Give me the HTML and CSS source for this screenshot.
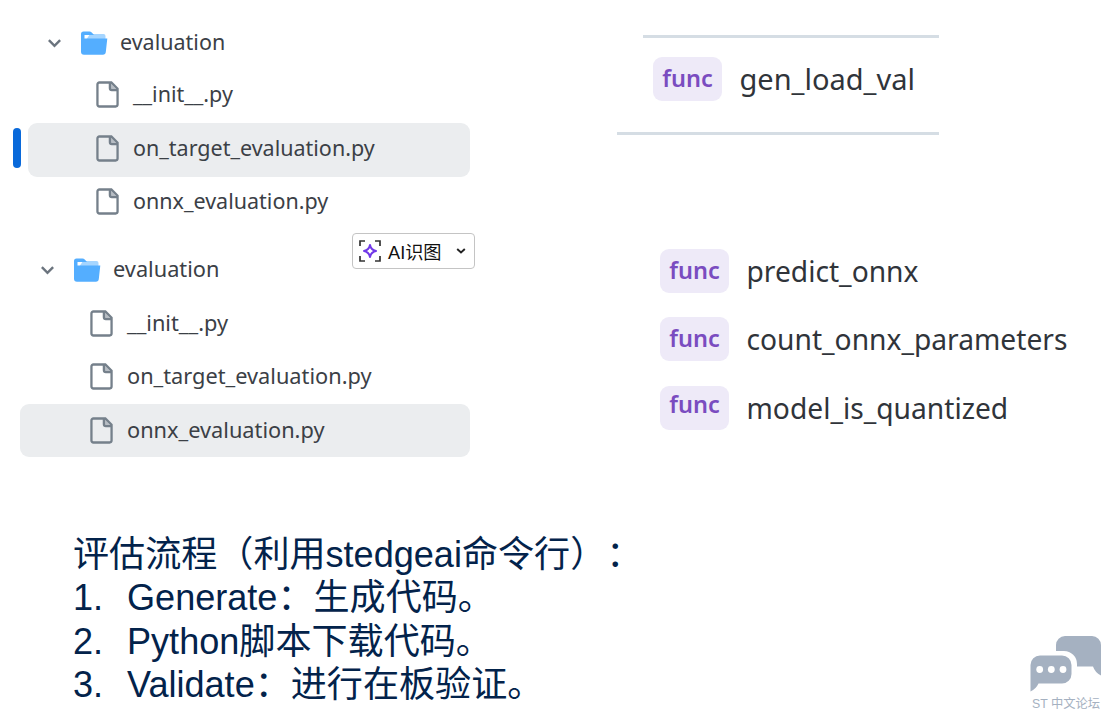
FILE: index.html
```
<!DOCTYPE html>
<html lang="zh-CN">
<head>
    <meta charset="UTF-8">
    <meta name="viewport" content="width=device-width, initial-scale=1.0">
    <title>评估流程</title>
    <link rel="stylesheet" href="styles.css">
</head>
<body>
    <!-- shared icons -->
    <svg class="icon-defs">
        <symbol id="icon-chevron" viewBox="0 0 16 10">
            <path d="M2 2l6 6 6-6" fill="none" stroke="#6b747e" stroke-width="2.6"/>
        </symbol>
        <symbol id="icon-folder" viewBox="0 0 28 24">
            <path d="M10 3h13.5a2 2 0 0 1 2 2v4H6z" fill="#a5d5ff"/>
            <path d="M1 3a2.5 2.5 0 0 1 2.500-2.500h6a3 3 0 0 1 2.200 1L14 4H4.500v3.500H27.300L25.800 21a3 3 0 0 1-3 2.700H4a3 3 0 0 1-3-3z" fill="#54aeff"/>
        </symbol>
        <symbol id="icon-file" viewBox="0 0 24 28">
            <path d="M14.500 1.500v6a2 2 0 0 0 2 2h6z" fill="#b7bdc4"/>
            <path d="M3.500 1.500H16L22.500 8V24.500a2 2 0 0 1-2 2h-17a2 2 0 0 1-2-2V3.500a2 2 0 0 1 2-2zM14.500 1.500v6a2 2 0 0 0 2 2h6" fill="none" stroke="#75808b" stroke-width="2.400"/>
        </symbol>
    </svg>

    <div class="top">
        <div class="trees">
            <div class="tree tree-first">
                <div class="row folder-row">
                    <svg class="chevron"><use href="#icon-chevron"/></svg>
                    <svg class="folder"><use href="#icon-folder"/></svg>
                    <span>evaluation</span>
                </div>
                <div class="row">
                    <svg class="file"><use href="#icon-file"/></svg>
                    <span>__init__.py</span>
                </div>
                <div class="row selected current">
                    <svg class="file"><use href="#icon-file"/></svg>
                    <span>on_target_evaluation.py</span>
                </div>
                <div class="row">
                    <svg class="file"><use href="#icon-file"/></svg>
                    <span>onnx_evaluation.py</span>
                </div>
            </div>

            <div class="tree tree-second">
                <div class="row folder-row">
                    <svg class="chevron"><use href="#icon-chevron"/></svg>
                    <svg class="folder"><use href="#icon-folder"/></svg>
                    <span>evaluation</span>
                </div>
                <div class="row">
                    <svg class="file"><use href="#icon-file"/></svg>
                    <span>__init__.py</span>
                </div>
                <div class="row">
                    <svg class="file"><use href="#icon-file"/></svg>
                    <span>on_target_evaluation.py</span>
                </div>
                <div class="row selected">
                    <svg class="file"><use href="#icon-file"/></svg>
                    <span>onnx_evaluation.py</span>
                </div>
            </div>
        </div>

        <div class="symbols">
            <div class="rule rule-short"></div>
            <div class="symbol single">
                <span class="badge">func</span>
                <span class="name">gen_load_val</span>
            </div>
            <div class="rule"></div>
            <div class="symbol-list">
                <div class="symbol"><span class="badge">func</span><span class="name">predict_onnx</span></div>
                <div class="symbol"><span class="badge">func</span><span class="name">count_onnx_parameters</span></div>
                <div class="symbol"><span class="badge raised">func</span><span class="name">model_is_quantized</span></div>
            </div>
        </div>
    </div>

    <div class="notes">
        <p>评估流程（利用stedgeai命令行）：</p>
        <div class="step"><span class="num">1.</span><span>Generate：生成代码。</span></div>
        <div class="step"><span class="num">2.</span><span>Python脚本下载代码。</span></div>
        <div class="step"><span class="num">3.</span><span>Validate：进行在板验证。</span></div>
    </div>

    <button class="ai-button">
        <svg class="ai-icon" viewBox="0 0 22 22" fill="none">
            <path d="M1 6V1h5M16 1h5v5M21 16v5h-5M6 21H1v-5" stroke="#333" stroke-width="1.700"/>
            <path d="M11 5Q12 10 17 11Q12 12 11 17Q10 12 5 11Q10 10 11 5z" stroke="#7138e8" stroke-width="2" stroke-linejoin="round"/>
        </svg>
        <span>AI识图</span>
        <svg class="ai-arrow" viewBox="0 0 10 6" fill="none">
            <path d="M1.200 1L5 4.500 8.800 1" stroke="#222" stroke-width="1.900"/>
        </svg>
    </button>

    <div class="watermark">
        <svg viewBox="0 0 72 56">
            <path d="M26 15V9a9 9 0 0 1 9-9h27a9 9 0 0 1 9 9v30.500q-6-3-8-9H47V28a13 13 0 0 0-13-13z" fill="#a5b1c1"/>
            <path d="M10 19.500h22a9.500 9.500 0 0 1 9.500 9.500v9a9.500 9.500 0 0 1-9.500 9.500H8.500Q6 53 0.500 55.500V29a9.500 9.500 0 0 1 9.500-9.500z" fill="#a5b1c1"/>
            <circle cx="9.700" cy="33.500" r="3.400" fill="#fff"/>
            <circle cx="21.300" cy="33.500" r="3.400" fill="#fff"/>
            <circle cx="33" cy="33.500" r="3.400" fill="#fff"/>
        </svg>
        <span>ST 中文论坛</span>
    </div>
</body>
</html>
```
FILE: styles.css
```
* {
    margin: 0;
    padding: 0;
    box-sizing: border-box;
}

body {
    position: relative;
    width: 1109px;
    height: 719px;
    overflow: hidden;
    background: #fff;
    font-family: "Noto Sans", "Noto Sans CJK SC", sans-serif;
}

svg {
    display: block;
    flex-shrink: 0;
}

.icon-defs {
    display: none;
}

.top {
    display: flex;
    height: 533px;
}

/* file trees */
.trees {
    width: 470px;
    padding-top: 16px;
}

.row {
    display: flex;
    align-items: center;
    height: 53.5px;
    padding-left: 68px;
    border-radius: 9px;
    color: #3b4046;
    font-size: 21.5px;
    line-height: 30px;
    white-space: nowrap;
}

.row span {
    margin-top: -4px;
}

.row.folder-row {
    padding-left: 19px;
}

.folder-row span {
    margin-top: -2px;
}

.chevron {
    width: 15px;
    height: 10px;
    margin-right: 18px;
}

.folder {
    width: 28px;
    height: 24px;
    margin-right: 12px;
}

.file {
    width: 23px;
    height: 27px;
    margin: -3px 14px 0 0;
}

.selected {
    background: #ebedef;
}

.tree-first {
    padding-left: 28px;
}

.current {
    position: relative;
}

.current::before {
    content: "";
    position: absolute;
    left: -15px;
    top: 5px;
    width: 8px;
    height: 40px;
    border-radius: 4px;
    background: #0969da;
}

.tree-second {
    padding: 13px 0 0 20px;
}

.tree-second .row {
    padding-left: 69.5px;
    font-size: 21.75px;
}

.tree-second .row span {
    margin-top: -1px;
}

.tree-second .file {
    margin-top: 0;
    margin-right: 14.5px;
}

.tree-second .folder-row {
    padding-left: 20px;
}

.tree-second .selected {
    height: 52.5px;
    margin-top: 0.5px;
}

/* function list */
.symbols {
    width: 460px;
    margin-left: 147px;
    padding-top: 35px;
}

.rule {
    width: 322px;
    height: 3px;
    background: #d5dde4;
}

.rule-short {
    width: 296px;
    margin-left: 26px;
}

.symbol {
    display: flex;
    align-items: center;
    height: 44px;
}

.single {
    height: 94px;
    padding: 0 0 12px 36px;
}

.badge {
    width: 69px;
    height: 44px;
    margin-right: 17.5px;
    border-radius: 9px;
    background: #eeeaf8;
    color: #7a4cc0;
    font-size: 23.5px;
    font-weight: 600;
    line-height: 42px;
    text-align: center;
}

.raised {
    line-height: 37px;
}

.name {
    color: #30343a;
    font-size: 28.2px;
    line-height: 44px;
}

.single .name {
    font-size: 29px;
}

.symbol-list {
    display: flex;
    flex-direction: column;
    gap: 24.5px;
    padding: 113.5px 0 0 43px;
}

/* evaluation steps */
.notes {
    padding-left: 73px;
    color: #03234b;
    font-family: "Liberation Sans", "Noto Sans CJK SC", sans-serif;
    font-size: 36.1px;
    line-height: 43.4px;
    text-spacing-trim: space-all;
}

.step {
    display: flex;
}

.num {
    width: 54px;
}

/* floating image tool */
.ai-button {
    position: absolute;
    left: 352px;
    top: 233px;
    display: flex;
    align-items: center;
    width: 123px;
    height: 36px;
    padding-left: 6px;
    border: 1px solid #c4c4c4;
    border-radius: 4px;
    background: #fff;
    color: #111;
    font-family: "Liberation Sans", "Noto Sans CJK SC", sans-serif;
    font-size: 18.2px;
}

.ai-icon {
    width: 22px;
    height: 22px;
    margin-right: 7px;
}

.ai-arrow {
    width: 10px;
    height: 6px;
    margin-left: 14px;
}

.watermark {
    position: absolute;
    left: 1030px;
    top: 636px;
    width: 72px;
    color: #a5b1c1;
    font-family: "Liberation Sans", "Noto Sans CJK SC", sans-serif;
    font-size: 12.3px;
    line-height: 18px;
    white-space: nowrap;
}

.watermark svg {
    width: 72px;
    height: 56px;
}

.watermark span {
    display: block;
    margin: 3px 0 0 2px;
}
```
